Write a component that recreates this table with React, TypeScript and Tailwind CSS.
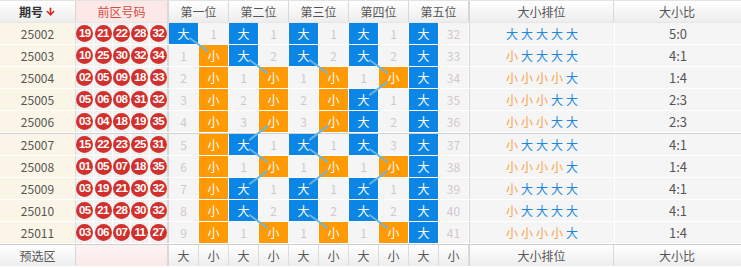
import { ArrowDown } from "lucide-react";

type Draw = { period: string; balls: string[]; pos: string };

const draws: Draw[] = [
    { period: "25002", balls: ["19", "21", "22", "28", "32"], pos: "大大大大大" },
    { period: "25003", balls: ["10", "25", "30", "32", "34"], pos: "小大大大大" },
    { period: "25004", balls: ["02", "05", "09", "18", "33"], pos: "小小小小大" },
    { period: "25005", balls: ["05", "06", "08", "31", "32"], pos: "小小小大大" },
    { period: "25006", balls: ["03", "04", "18", "19", "35"], pos: "小小小大大" },
    { period: "25007", balls: ["15", "22", "23", "25", "31"], pos: "小大大大大" },
    { period: "25008", balls: ["01", "05", "07", "18", "35"], pos: "小小小小大" },
    { period: "25009", balls: ["03", "19", "21", "30", "32"], pos: "小大大大大" },
    { period: "25010", balls: ["05", "21", "28", "30", "32"], pos: "小大大大大" },
    { period: "25011", balls: ["03", "06", "07", "11", "27"], pos: "小小小小大" },
];

// missing counts, carried from before 25002
const bigMiss = [0, 0, 0, 0, 0];
const smallMiss = [0, 0, 0, 0, 31];
const cellsByRow = draws.map(d =>
    d.pos.split("").map((v, p) => {
        if (v === "大") {
            bigMiss[p] = 0;
            smallMiss[p]++;
            return { big: true, miss: smallMiss[p] };
        }
        smallMiss[p] = 0;
        bigMiss[p]++;
        return { big: false, miss: bigMiss[p] };
    })
);

const positions = ["第一位", "第二位", "第三位", "第四位", "第五位"];

const colX = (c: number) => 169 + c * 30 + 14.5;
const rowY = (i: number) => 23 + i * 22 + (i >= 5 ? 1 : 0) + 10.5;

function Lines() {
    const segs: { x1: number; y1: number; x2: number; y2: number }[] = [];
    for (let p = 0; p < 5; p++) {
        for (let i = 0; i < draws.length - 1; i++) {
            const c1 = p * 2 + (draws[i].pos[p] === "大" ? 0 : 1);
            const c2 = p * 2 + (draws[i + 1].pos[p] === "大" ? 0 : 1);
            if (c1 === c2) continue;
            const ax = colX(c1), ay = rowY(i), bx = colX(c2), by = rowY(i + 1);
            const len = Math.hypot(bx - ax, by - ay);
            const ux = (bx - ax) / len, uy = (by - ay) / len;
            const cut = 8;
            segs.push({ x1: ax + ux * cut, y1: ay + uy * cut, x2: bx - ux * cut, y2: by - uy * cut });
        }
    }
    return (
        <svg className="absolute inset-0 pointer-events-none" width={741} height={268}>
            {segs.map((s, k) => (
                <line key={k} {...s} stroke="#6bb6de" strokeWidth={2} strokeLinecap="round" />
            ))}
        </svg>
    );
}

function Ball({ n }: { n: string }) {
    return (
        <div className="flex-1 flex items-center justify-center bg-[#f1f1f1] border-r border-white last:border-r-0">
            <div className="w-[17px] h-[17px] rounded-full bg-[#d2302c] text-white text-[11.5px] font-bold leading-none flex items-center justify-center tracking-[-0.6px] font-['Liberation_Sans',sans-serif]">
                {n}
            </div>
        </div>
    );
}

function DataRow({ d, i }: { d: Draw; i: number }) {
    const cells = cellsByRow[i];
    const big = d.pos.split("").filter(v => v === "大").length;
    return (
        <div className="flex h-[22px] border-b border-white">
            <div className="w-[76px] shrink-0 bg-[#faf5e6] border-r border-[#dedede] flex items-center justify-center text-[#555]">
                {d.period}
            </div>
            <div className="w-[93px] shrink-0 flex border-r-2 border-[#d9d9d9]">
                {d.balls.map((b, k) => <Ball key={k} n={b} />)}
            </div>
            {cells.map((c, p) => (
                <div key={p} className="flex">
                    <div className={`w-[30px] border-r border-white flex items-center justify-center ${c.big ? "bg-[#0b86e6] text-white" : "bg-[#f5f5f5] text-[#d3c7cf]"}`}>
                        {c.big ? "大" : c.miss}
                    </div>
                    <div className={`w-[30px] border-r border-white flex items-center justify-center ${!c.big ? "bg-[#ff9a05] text-white" : "bg-[#f5f5f5] text-[#d3c7cf]"}`}>
                        {!c.big ? "小" : c.miss}
                    </div>
                </div>
            ))}
            <div className="w-[145px] shrink-0 bg-[#f5f5f5] border-l border-[#d4d4d4] flex items-center justify-center gap-[3px]">
                {d.pos.split("").map((v, k) => (
                    <span key={k} className={v === "大" ? "text-[#2187dc]" : "text-[#f5a14a]"}>{v}</span>
                ))}
            </div>
            <div className="w-[127px] shrink-0 bg-[#f5f5f5] border-l border-white flex items-center justify-center text-[#555] text-[13px]">
                {big}:{5 - big}
            </div>
        </div>
    );
}

function HeaderRow({ footer }: { footer?: boolean }) {
    return (
        <div className={`flex ${footer ? "h-[22px] border-t border-[#cfcfcf]" : "h-[23px] border-t border-[#e3e3e3] border-b border-b-[#e6e6e6]"} bg-gradient-to-b from-white to-[#ededed] text-[#555]`}>
            <div className="w-[76px] shrink-0 border-r border-[#d6d6d6] flex items-center justify-center">
                {footer ? "预选区" : (
                    <span className="flex items-center gap-[2px] text-[#333] font-bold">
                        期号<ArrowDown size={11} strokeWidth={3.5} className="text-[#d8261c]" />
                    </span>
                )}
            </div>
            <div className={`w-[93px] shrink-0 border-r-2 border-[#d9d9d9] flex items-center justify-center text-[#d44a44] ${footer ? "bg-gradient-to-b from-[#fdf3f3] to-[#fbe9e9]" : "bg-[#fde8e8]"}`}>
                {footer ? "" : "前区号码"}
            </div>
            {footer
                ? Array.from({ length: 10 }).map((_, k) => (
                    <div key={k} className="w-[30px] border-r border-[#dddddd] flex items-center justify-center">
                        {k % 2 === 0 ? "大" : "小"}
                    </div>
                ))
                : positions.map(p => (
                    <div key={p} className="w-[60px] border-r border-[#d8d8d8] flex items-center justify-center">
                        {p}
                    </div>
                ))}
            <div className="w-[145px] shrink-0 border-l border-[#d4d4d4] border-r border-r-[#dadada] flex items-center justify-center">
                大小排位
            </div>
            <div className="w-[126px] shrink-0 flex items-center justify-center">大小比</div>
        </div>
    );
}

export default function App() {
    return (
        <div className="relative w-[741px] h-[268px] overflow-hidden bg-white text-[12px] font-['Noto_Sans_CJK_SC',sans-serif]">
            <HeaderRow />
            {draws.slice(0, 5).map((d, i) => <DataRow key={d.period} d={d} i={i} />)}
            <div className="h-px bg-[#d2d2d2]" />
            {draws.slice(5).map((d, i) => <DataRow key={d.period} d={d} i={i + 5} />)}
            <HeaderRow footer />
            <Lines />
        </div>
    );
}
